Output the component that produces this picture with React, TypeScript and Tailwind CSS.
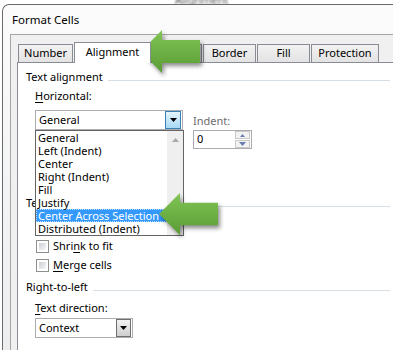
import React from 'react';

const Caret = ({ color = '#000' }: { color?: string }) => (
  <svg width="7" height="4" viewBox="0 0 7 4">
    <path d="M0 0h7L3.5 4z" fill={color} />
  </svg>
);

function GroupHeader({ label }: { label: string }) {
  return (
    <div className="flex items-center pl-[8px] pr-[3px] leading-[16px]">
      <span>{label}</span>
      <div className="ml-[5px] mt-[6px] h-px flex-1 bg-[#d5dfe5]" />
    </div>
  );
}

function Checkbox({ label, hot }: { label: string; hot: number }) {
  return (
    <div className="flex items-center pl-[18px] leading-[16px]">
      <div className="h-[13px] w-[13px] border border-[#8e8f8f] bg-white p-[2px]">
        <div className="h-full w-full bg-gradient-to-br from-[#cbcfd5] to-[#f6f6f6]" />
      </div>
      <span className="ml-[4px]">
        {label.slice(0, hot)}
        <span className="underline underline-offset-2">{label[hot]}</span>
        {label.slice(hot + 1)}
      </span>
    </div>
  );
}

function Tab({ label, width, selected }: { label: string; width: string; selected?: boolean }) {
  if (selected) {
    return (
      <div
        className={`relative z-10 -mb-px flex h-[21px] ${width} items-center justify-center border border-b-0 border-[#898c95] bg-white pb-[2px]`}
      >
        {label}
      </div>
    );
  }
  return (
    <div
      className={`flex h-[18px] ${width} items-center justify-center border border-b-0 border-[#898c95] bg-gradient-to-b from-[#f2f2f2] to-[#e3e3e3]`}
    >
      {label}
    </div>
  );
}

const items = [
  'General',
  'Left (Indent)',
  'Center',
  'Right (Indent)',
  'Fill',
  'Justify',
  'Center Across Selection',
  'Distributed (Indent)',
];

function GreenArrow({ className, w, h }: { className: string; w: number; h: number }) {
  const head = 21;
  const bodyTop = h * 0.23;
  const bodyBot = h * 0.77;
  return (
    <svg
      className={className}
      width={w}
      height={h}
      viewBox={`0 0 ${w} ${h}`}
      style={{ filter: 'drop-shadow(2px 3px 2px rgba(0,0,0,0.45))' }}
    >
      <defs>
        <linearGradient id={`g${w}${h}`} x1="0" y1="0" x2="0" y2="1">
          <stop offset="0" stopColor="#80c455" />
          <stop offset="1" stopColor="#5a9c34" />
        </linearGradient>
      </defs>
      <path
        d={`M0 ${h / 2}L${head} 0V${bodyTop}H${w}V${bodyBot}H${head}V${h}Z`}
        fill={`url(#g${w}${h})`}
      />
    </svg>
  );
}

export default function App() {
  return (
    <div className="relative h-[350px] w-[393px] overflow-hidden bg-white font-['Noto_Sans','Liberation_Sans',sans-serif] text-[11px] text-black">
      {/* blurred window behind */}
      <div className="absolute left-[175px] top-[-8px] text-[#555] blur-[1px]">Alignment</div>

      {/* Window */}
      <div className="relative ml-[2px] mt-[4px] h-[346px] rounded-tl-[7px] border-l border-t border-[#6a6a6a] bg-gradient-to-b from-[#fbfbfb] to-[#eceef0]">
        <div className="h-[29px] pl-[9px] pt-[7px] text-[11.5px] leading-[16px]">Format Cells</div>

        {/* Panel */}
        <div className="ml-[7px] flex h-[317px] flex-col border-l border-t border-[#a5a5a5] bg-[#f0f0f0] pl-[6px] pt-[7px]">
          {/* Tabs */}
          <div className="flex h-[20px] items-end gap-px pl-[1px]">
            <Tab label="Number" width="w-[55px]" />
            <Tab label="Alignment" width="w-[77px]" selected />
            <Tab label="Font" width="w-[50px]" />
            <Tab label="Border" width="w-[53px]" />
            <Tab label="Fill" width="w-[53px]" />
            <Tab label="Protection" width="w-[68px]" />
          </div>

          {/* Tab page */}
          <div className="flex-1 border-l border-t border-[#898c95] bg-white pt-[6px]">
            <GroupHeader label="Text alignment" />
            <div className="mt-[3px] pl-[17px] leading-[16px]">
              <span className="underline underline-offset-2">H</span>orizontal:
            </div>

            <div className="mt-[6px] flex gap-[10px] pl-[17px]">
              <div className="flex h-[20px] w-[148px] items-center border border-[#abadb3] bg-white">
                <span className="flex-1 pl-[3px]">General</span>
                <div className="mr-px flex h-[18px] w-[16px] items-center justify-center border border-[#3c7fb1] bg-gradient-to-b from-[#e5f4fc] to-[#a7d9f5]">
                  <Caret />
                </div>
              </div>
              <div className="pt-[3px]">
                <div className="leading-[16px] text-[#6d6d6d]">Indent:</div>
                <div className="mt-px flex h-[19px] w-[59px] items-center border border-[#abadb3] bg-white">
                  <span className="flex-1 pl-[3px]">0</span>
                  <div className="mr-px flex w-[15px] flex-col gap-px">
                    <div className="flex h-[8px] items-center justify-center border border-[#c9c9c9] bg-[#f2f2f2]">
                      <svg width="5" height="3" viewBox="0 0 5 3">
                        <path d="M0 3h5L2.5 0z" fill="#6a7fb0" />
                      </svg>
                    </div>
                    <div className="flex h-[8px] items-center justify-center border border-[#c9c9c9] bg-[#f2f2f2]">
                      <Caret color="#6a7fb0" />
                    </div>
                  </div>
                </div>
              </div>
            </div>

            <div className="mt-[46px]">
              <GroupHeader label="Text control" />
            </div>
            <div className="mt-[27px]">
              <Checkbox label="Shrink to fit" hot={4} />
            </div>
            <div className="mt-[3px]">
              <Checkbox label="Merge cells" hot={0} />
            </div>
            <div className="mt-[6px]">
              <GroupHeader label="Right-to-left" />
            </div>
            <div className="mt-[5px] pl-[17px] leading-[16px]">
              <span className="underline underline-offset-2">T</span>ext direction:
            </div>
            <div className="ml-[17px] mt-[2px] flex h-[20px] w-[98px] items-center border border-[#abadb3] bg-white">
              <span className="flex-1 pl-[3px]">Context</span>
              <div className="mr-px flex h-[18px] w-[15px] items-center justify-center border border-[#707070] bg-gradient-to-b from-[#f2f2f2] to-[#cfcfcf]">
                <Caret />
              </div>
            </div>
          </div>
        </div>
      </div>

      {/* Open dropdown list */}
      <div className="absolute left-[35px] top-[130px] flex h-[106px] w-[149px] border border-[#646464] bg-white">
        <div className="flex-1">
          {items.map((it) => (
            <div
              key={it}
              className={
                it === 'Center Across Selection'
                  ? 'h-[13px] whitespace-nowrap border border-dotted border-[#b9dcff] bg-[#3399ff] pl-px leading-[11px] text-white'
                  : 'h-[13px] whitespace-nowrap pl-[2px] leading-[13px]'
              }
            >
              {it}
            </div>
          ))}
        </div>
        <div className="flex w-[16px] justify-center bg-[#efefef] pt-[7px]">
          <svg width="7" height="4" viewBox="0 0 7 4">
            <path d="M0 4h7L3.5 0z" fill="#a8a8a8" />
          </svg>
        </div>
      </div>

      {/* Callout arrows */}
      <GreenArrow className="absolute left-[141px] top-[30px]" w={59} h={43} />
      <GreenArrow className="absolute left-[159px] top-[193px]" w={59} h={42} />
    </div>
  );
}
